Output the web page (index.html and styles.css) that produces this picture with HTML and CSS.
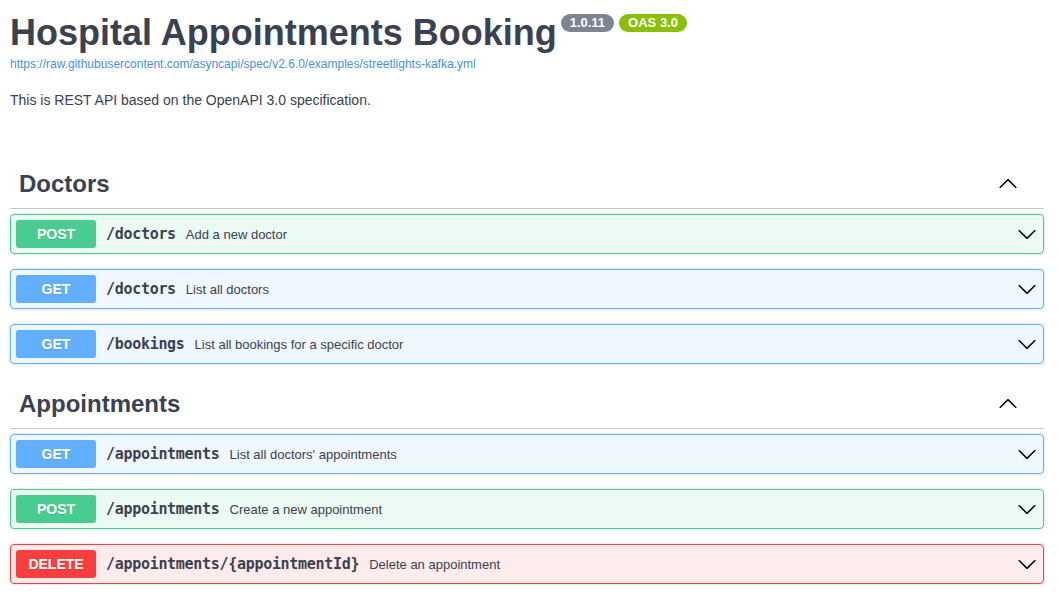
FILE: index.html
```html
<!DOCTYPE html>
<html>
<head>
<meta charset="utf-8">
<link rel="stylesheet" href="styles.css">
</head>
<body>
<div class="wrapper">
  <div class="info">
    <h2 class="title">Hospital Appointments Booking<span class="badges"><small class="badge version">1.0.11</small><small class="badge oas">OAS 3.0</small></span></h2>
    <a class="url" href="#">https://raw.githubusercontent.com/asyncapi/spec/v2.6.0/examples/streetlights-kafka.yml</a>
    <p class="desc">This is REST API based on the OpenAPI 3.0 specification.</p>
  </div>

  <section class="tag-section">
    <h3 class="tag"><span>Doctors</span>
      <svg class="arrow up" viewBox="0 0 20 20" width="20" height="20"><path d="M17.418 6.109c.272-.268.709-.268.979 0s.271.701 0 .969l-7.908 7.83c-.27.268-.707.268-.979 0l-7.908-7.83c-.27-.268-.27-.701 0-.969.271-.268.709-.268.979 0L10 13.25l7.418-7.141z"/></svg>
    </h3>
    <div class="opblock post"><span class="method">POST</span><span class="path">/doctors</span><span class="summary">Add a new doctor</span><svg class="arrow" viewBox="0 0 20 20" width="20" height="20"><path d="M17.418 6.109c.272-.268.709-.268.979 0s.271.701 0 .969l-7.908 7.83c-.27.268-.707.268-.979 0l-7.908-7.83c-.27-.268-.27-.701 0-.969.271-.268.709-.268.979 0L10 13.25l7.418-7.141z"/></svg></div>
    <div class="opblock get"><span class="method">GET</span><span class="path">/doctors</span><span class="summary">List all doctors</span><svg class="arrow" viewBox="0 0 20 20" width="20" height="20"><path d="M17.418 6.109c.272-.268.709-.268.979 0s.271.701 0 .969l-7.908 7.83c-.27.268-.707.268-.979 0l-7.908-7.83c-.27-.268-.27-.701 0-.969.271-.268.709-.268.979 0L10 13.25l7.418-7.141z"/></svg></div>
    <div class="opblock get"><span class="method">GET</span><span class="path">/bookings</span><span class="summary">List all bookings for a specific doctor</span><svg class="arrow" viewBox="0 0 20 20" width="20" height="20"><path d="M17.418 6.109c.272-.268.709-.268.979 0s.271.701 0 .969l-7.908 7.83c-.27.268-.707.268-.979 0l-7.908-7.83c-.27-.268-.27-.701 0-.969.271-.268.709-.268.979 0L10 13.25l7.418-7.141z"/></svg></div>
  </section>

  <section class="tag-section">
    <h3 class="tag"><span>Appointments</span>
      <svg class="arrow up" viewBox="0 0 20 20" width="20" height="20"><path d="M17.418 6.109c.272-.268.709-.268.979 0s.271.701 0 .969l-7.908 7.83c-.27.268-.707.268-.979 0l-7.908-7.83c-.27-.268-.27-.701 0-.969.271-.268.709-.268.979 0L10 13.25l7.418-7.141z"/></svg>
    </h3>
    <div class="opblock get"><span class="method">GET</span><span class="path">/appointments</span><span class="summary">List all doctors' appointments</span><svg class="arrow" viewBox="0 0 20 20" width="20" height="20"><path d="M17.418 6.109c.272-.268.709-.268.979 0s.271.701 0 .969l-7.908 7.83c-.27.268-.707.268-.979 0l-7.908-7.83c-.27-.268-.27-.701 0-.969.271-.268.709-.268.979 0L10 13.25l7.418-7.141z"/></svg></div>
    <div class="opblock post"><span class="method">POST</span><span class="path">/appointments</span><span class="summary">Create a new appointment</span><svg class="arrow" viewBox="0 0 20 20" width="20" height="20"><path d="M17.418 6.109c.272-.268.709-.268.979 0s.271.701 0 .969l-7.908 7.83c-.27.268-.707.268-.979 0l-7.908-7.83c-.27-.268-.27-.701 0-.969.271-.268.709-.268.979 0L10 13.25l7.418-7.141z"/></svg></div>
    <div class="opblock delete"><span class="method">DELETE</span><span class="path">/appointments/{appointmentId}</span><span class="summary">Delete an appointment</span><svg class="arrow" viewBox="0 0 20 20" width="20" height="20"><path d="M17.418 6.109c.272-.268.709-.268.979 0s.271.701 0 .969l-7.908 7.83c-.27.268-.707.268-.979 0l-7.908-7.83c-.27-.268-.27-.701 0-.969.271-.268.709-.268.979 0L10 13.25l7.418-7.141z"/></svg></div>
  </section>
</div>
</body>
</html>
```
FILE: styles.css
```css
html, body {
  margin: 0;
  padding: 0;
  background: #fff;
}
body {
  font-family: "Liberation Sans", Arial, sans-serif;
  color: #3b4151;
}
.wrapper {
  padding: 0 14px 0 10px;
}
.info {
  padding-top: 12px;
}
.title {
  margin: 0;
  font-size: 36px;
  font-weight: 700;
  line-height: 42px;
  color: #3b4151;
}
.badges {
  display: inline-flex;
  gap: 5px;
  vertical-align: top;
  margin-left: 4px;
  position: relative;
  top: 2px;
}
.badge {
  display: inline-block;
  font-size: 13px;
  font-weight: 700;
  line-height: 14px;
  color: #fff;
  padding: 2px 9px;
  border-radius: 57px;
}
.version { background: #7d8492; }
.oas { background: #89bf04; }
.url {
  display: block;
  font-size: 12px;
  color: #4990e2;
  text-decoration: none;
  margin-top: 3px;
}
.desc {
  margin: 21px 0 0;
  font-size: 14px;
  line-height: 16px;
}
.tag-section:first-of-type {
  margin-top: 51px;
}
.tag {
  display: flex;
  align-items: center;
  justify-content: space-between;
  margin: 0 0 5px;
  padding: 10px 26px 10px 9px;
  font-size: 24px;
  font-weight: 700;
  line-height: 29px;
  border-bottom: 1px solid rgba(59, 65, 81, .3);
}
.arrow {
  flex: none;
  fill: #000;
}
.arrow.up {
  transform: rotate(180deg);
}
.opblock {
  display: flex;
  align-items: center;
  margin: 0 0 15px;
  padding: 5px;
  border: 1px solid;
  border-radius: 4px;
  box-shadow: 0 0 3px rgba(0, 0, 0, .19);
}
.opblock .arrow {
  margin-left: auto;
  margin-right: 1px;
}
.method {
  min-width: 80px;
  padding: 6px 0;
  font-size: 14px;
  line-height: 16px;
  font-weight: 700;
  text-align: center;
  color: #fff;
  border-radius: 3px;
  text-shadow: 0 1px 0 rgba(0, 0, 0, .1);
}
.path {
  padding: 0 10px;
  font-family: "DejaVu Sans Mono", monospace;
  font-size: 15px;
  letter-spacing: -0.3px;
  font-weight: 700;
  color: #3b4151;
}
.summary {
  font-size: 13px;
  color: #3b4151;
}
.post { background: rgba(73, 204, 144, .1); border-color: #49cc90; }
.post .method { background: #49cc90; }
.get { background: rgba(97, 175, 254, .1); border-color: #61affe; }
.get .method { background: #61affe; }
.delete { background: rgba(249, 62, 62, .1); border-color: #f93e3e; }
.delete .method { background: #f93e3e; }
```
